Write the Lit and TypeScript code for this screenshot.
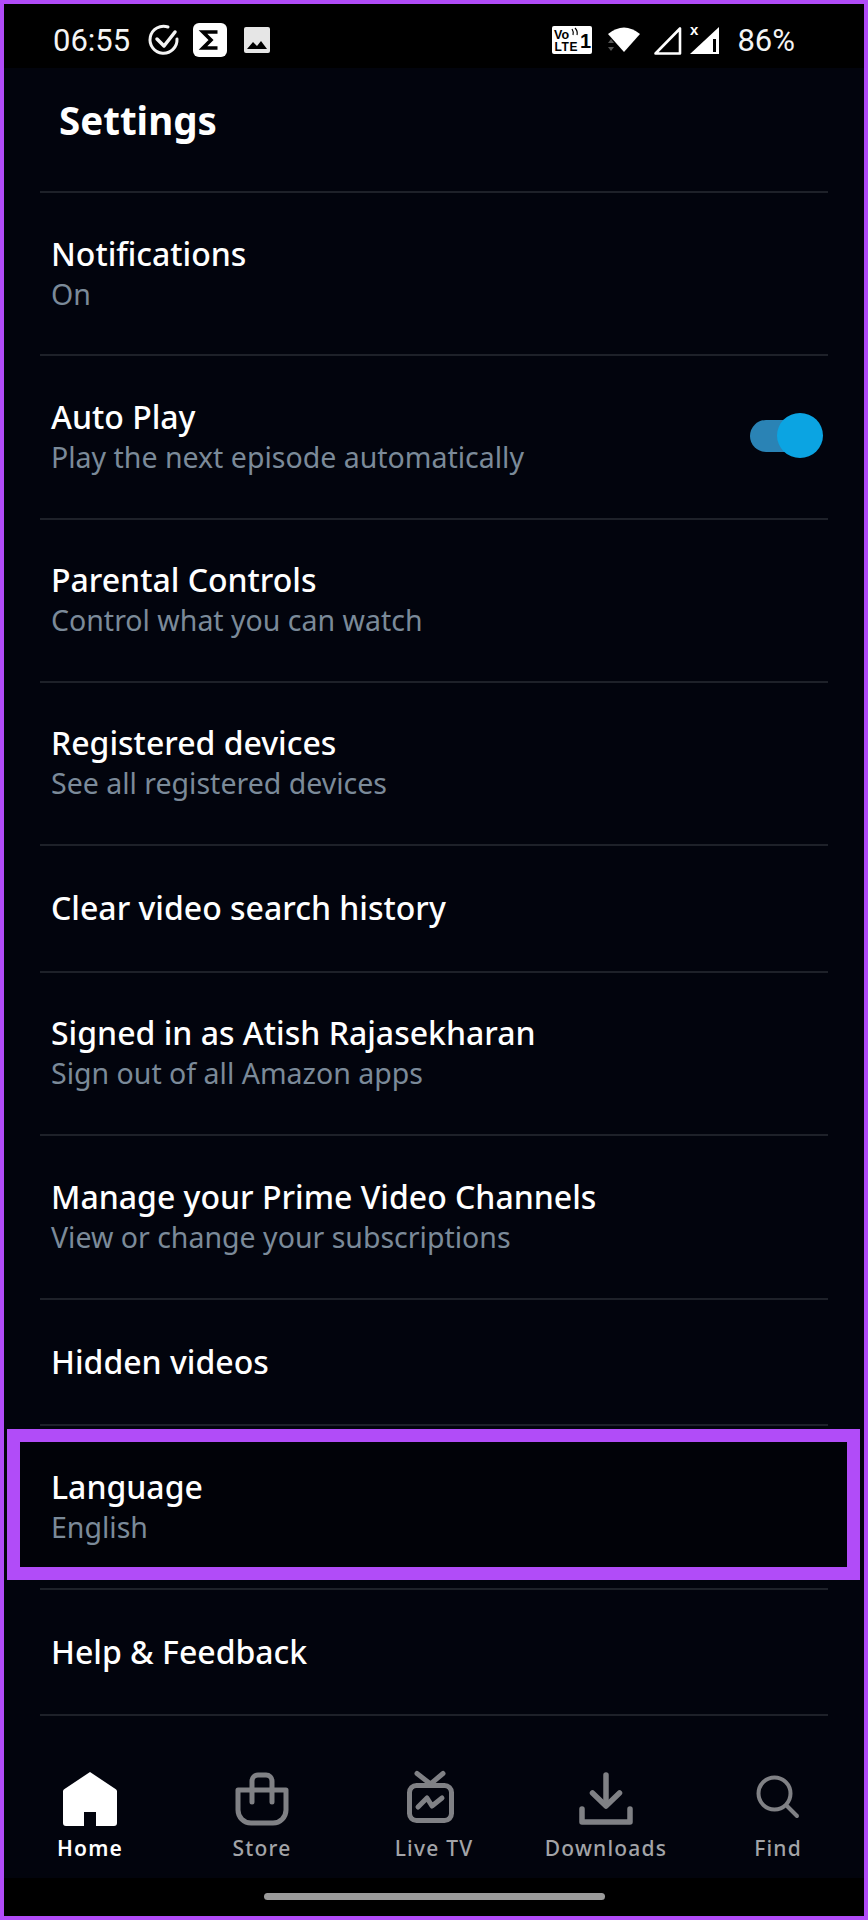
import { LitElement, html, css, svg } from "lit";
import { customElement } from "lit/decorators.js";

interface Row {
  title: string;
  sub?: string;
  toggle?: boolean;
  selected?: boolean;
}

const rows: Row[] = [
  { title: "Notifications", sub: "On" },
  { title: "Auto Play", sub: "Play the next episode automatically", toggle: true },
  { title: "Parental Controls", sub: "Control what you can watch" },
  { title: "Registered devices", sub: "See all registered devices" },
  { title: "Clear video search history" },
  { title: "Signed in as Atish Rajasekharan", sub: "Sign out of all Amazon apps" },
  { title: "Manage your Prime Video Channels", sub: "View or change your subscriptions" },
  { title: "Hidden videos" },
  { title: "Language", sub: "English", selected: true },
  { title: "Help & Feedback" },
];

const icons = {
  home: svg`<path fill="currentColor" d="M27 0 L1.5 17 a3 3 0 0 0 -1.5 3 V51 a3 3 0 0 0 3 3 H21 V40 H33 V54 H51 a3 3 0 0 0 3 -3 V20 a3 3 0 0 0 -1.5 -3 Z"/>`,
  store: svg`<g fill="none" stroke="currentColor" stroke-width="5" stroke-linecap="round" stroke-linejoin="round"><path d="M3 18 H51 V38 a13 13 0 0 1 -13 13 H16 a13 13 0 0 1 -13 -13 Z"/><path d="M17 30 V9 a6 6 0 0 1 6 -6 H31 a6 6 0 0 1 6 6 V30"/></g>`,
  live: svg`<g fill="none" stroke="currentColor" stroke-width="5" stroke-linecap="round" stroke-linejoin="round"><rect x="2.5" y="13.5" width="42" height="35" rx="7"/><path d="M10 1.5 L23.5 12 L36 1.5"/><path d="M11 35 L20 26 L25 34 L35 26"/></g>`,
  downloads: svg`<g fill="none" stroke="currentColor" stroke-width="5.5" stroke-linecap="round" stroke-linejoin="round"><path d="M27 3 V33"/><path d="M13.5 21 L27 34 L40.5 21"/><path d="M3 37 V50 H51 V37"/></g>`,
  find: svg`<g fill="none" stroke="currentColor" stroke-width="4" stroke-linecap="round"><circle cx="23.5" cy="21.5" r="16"/><path d="M35.5 33.5 L46 44"/></g>`,
};

const tabs = [
  { label: "Home", icon: icons.home, active: true },
  { label: "Store", icon: icons.store },
  { label: "Live TV", icon: icons.live },
  { label: "Downloads", icon: icons.downloads },
  { label: "Find", icon: icons.find },
];

@customElement("app-root")
export class AppRoot extends LitElement {
  static styles = css`
    :host {
      display: block;
    }

    .frame {
      box-sizing: border-box;
      width: 868px;
      height: 1920px;
      border: 4px solid #b14cf8;
      background: #02040d;
      display: flex;
      flex-direction: column;
      font-family: "Noto Sans", sans-serif;
      color: #fff;
      overflow: hidden;
    }

    .status {
      height: 64px;
      flex: none;
      box-sizing: border-box;
      background: #000;
      display: flex;
      align-items: center;
      padding: 8px 69px 0 49px;
      font-family: Roboto, sans-serif;
      font-size: 31px;
      color: #f4f4f4;
    }

    .status svg {
      display: block;
      flex: none;
      overflow: visible;
    }

    .status .spacer {
      flex: 1;
    }

    .header {
      height: 123px;
      flex: none;
      box-sizing: border-box;
      padding: 27px 0 0 55px;
      font-size: 38.5px;
      line-height: 50px;
      font-weight: 700;
    }

    .list {
      flex: none;
      margin: 0 36px;
      border-bottom: 2px solid #1e2129;
    }

    .row {
      position: relative;
      box-sizing: border-box;
      height: 163.3px;
      border-top: 2px solid #1e2129;
      padding: 39.5px 0 0 11px;
    }

    .row.single {
      height: 126.8px;
      padding-top: 41px;
    }

    .row .title {
      font-size: 32px;
      line-height: 42px;
      font-weight: 500;
      white-space: nowrap;
    }

    .row .sub {
      margin-top: -1px;
      font-size: 28.5px;
      line-height: 40px;
      color: #7b8a99;
      white-space: nowrap;
    }

    .toggle {
      position: absolute;
      right: 5px;
      top: 57px;
      width: 73px;
      height: 45px;
    }

    .toggle .track {
      position: absolute;
      left: 0;
      top: 7px;
      width: 58px;
      height: 32px;
      border-radius: 16px;
      background: #2a83b5;
    }

    .toggle .knob {
      position: absolute;
      right: 0;
      top: 0;
      width: 46px;
      height: 45px;
      border-radius: 50%;
      background: #0ba4e2;
    }

    .highlight {
      position: absolute;
      left: -33px;
      right: -32px;
      top: 3px;
      height: 151px;
      box-sizing: border-box;
      border: 13px solid #b14cf8;
      background: #010208;
    }

    .row.selected > .title,
    .row.selected > .sub {
      position: relative;
    }

    .nav {
      flex: 1;
      display: grid;
      grid-template-columns: repeat(5, 172px);
    }

    .tab {
      display: flex;
      flex-direction: column;
      align-items: center;
      color: #808185;
      padding-top: 56px;
    }

    .tab.active {
      color: #fff;
    }

    .tab svg {
      display: block;
      width: 54px;
      height: 54px;
      overflow: visible;
    }

    .tab span {
      margin-top: 7px;
      font-size: 21px;
      line-height: 30px;
      font-weight: 500;
      letter-spacing: 1.2px;
      color: #a3a4a8;
    }

    .tab.active span {
      color: #fff;
      font-weight: 600;
    }

    .gesture {
      height: 38px;
      flex: none;
      background: #000;
      display: flex;
      justify-content: center;
      padding-top: 15px;
      box-sizing: border-box;
    }

    .gesture div {
      width: 341px;
      height: 7px;
      border-radius: 4px;
      background: #9b9b9b;
    }

    .gap-14 { margin-left: 14px; }
    .gap-17 { margin-left: 17px; }
    .gap-8 { margin-left: 8px; }
    .gap-10 { margin-left: 10px; }
  `;

  private renderStatus() {
    return html`
      <div class="status">
        <span>06:55</span>
        <svg class="gap-17" width="32" height="32" viewBox="0 0 32 32" fill="none" stroke="#f4f4f4" stroke-width="3" stroke-linecap="round" stroke-linejoin="round">
          <path d="M21 3 A13.5 13.5 0 1 0 30 15"/>
          <path d="M10 15 L17 22 L28 8" stroke-width="3.5"/>
        </svg>
        <svg class="gap-14" width="34" height="34" viewBox="0 0 34 34">
          <rect width="34" height="34" rx="6" fill="#fff"/>
          <path d="M24.5 9 H10 L18 17 L10 25 H24.5" fill="none" stroke="#000" stroke-width="3.6"/>
        </svg>
        <svg class="gap-17" width="26" height="26" viewBox="0 0 26 26">
          <rect width="26" height="26" rx="2" fill="#e6e6e6"/>
          <path d="M3 22 L9 15 L13 19 L17 14 L23 22 Z" fill="#000"/>
        </svg>
        <span class="spacer"></span>
        <svg width="40" height="28" viewBox="0 0 40 28">
          <rect width="40" height="28" rx="2" fill="#fff"/>
          <g font-family="Liberation Sans, sans-serif" font-weight="700" fill="#000">
            <text x="2" y="13" font-size="12.5">Vo</text>
            <text x="2.5" y="25" font-size="12" textLength="23">LTE</text>
            <text x="28" y="22" font-size="20">1</text>
          </g>
          <path d="M20 3 Q22 6 21 9 M23 2 Q26 5 25 9" stroke="#000" stroke-width="1.2" fill="none"/>
        </svg>
        <svg class="gap-14" width="36" height="28" viewBox="0 0 36 28">
          <path d="M2 8 Q18 -5 34 8 L18 26 Z" fill="#fff"/>
          <path d="M2 17 L5 13 L8 17 Z M2 21 L8 21 L5 25 Z" fill="#555"/>
        </svg>
        <svg class="gap-10" width="30" height="30" viewBox="0 0 30 30" fill="none" stroke="#fff" stroke-width="2.6">
          <path d="M28 3.5 V28.5 H3.5 Z" stroke-linejoin="round"/>
        </svg>
        <svg class="gap-8" width="30" height="30" viewBox="0 0 30 30">
          <path d="M29 2 V29 H0 Z" fill="#fff"/>
          <rect x="23" y="14" width="3" height="13" fill="#000"/>
          <text x="0" y="10" font-family="Liberation Sans, sans-serif" font-size="15" font-weight="700" fill="#fff">x</text>
        </svg>
        <span class="gap-17">86%</span>
      </div>
    `;
  }

  private renderRow(r: Row) {
    return html`
      <div class="row ${r.sub ? "" : "single"} ${r.selected ? "selected" : ""}">
        ${r.selected ? html`<div class="highlight"></div>` : ""}
        <div class="title">${r.title}</div>
        ${r.sub ? html`<div class="sub">${r.sub}</div>` : ""}
        ${r.toggle
          ? html`<div class="toggle"><div class="track"></div><div class="knob"></div></div>`
          : ""}
      </div>
    `;
  }

  render() {
    return html`
      <div class="frame">
        ${this.renderStatus()}
        <div class="header">Settings</div>
        <div class="list">${rows.map((r) => this.renderRow(r))}</div>
        <div class="nav">
          ${tabs.map(
            (t) => html`
              <div class="tab ${t.active ? "active" : ""}">
                <svg viewBox="0 0 54 54">${t.icon}</svg>
                <span>${t.label}</span>
              </div>
            `
          )}
        </div>
        <div class="gesture"><div></div></div>
      </div>
    `;
  }
}
